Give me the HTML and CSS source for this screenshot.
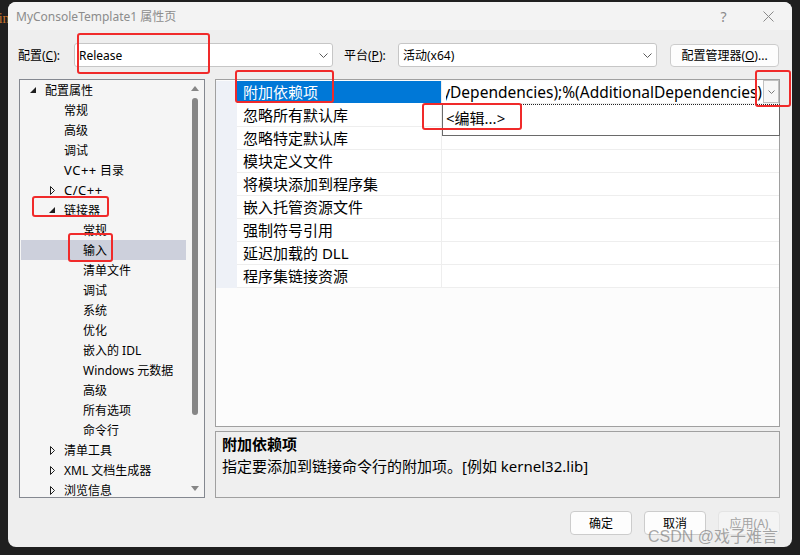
FILE: index.html
```html
<!DOCTYPE html>
<html lang="zh-CN">
<head>
<meta charset="utf-8">
<title>MyConsoleTemplate1 属性页</title>
<link rel="stylesheet" href="styles.css">
</head>
<body>
<span class="bg-text">Win</span>
<div class="dialog">
  <div class="titlebar">
    <span class="title">MyConsoleTemplate1 属性页</span>
    <span class="cap-btn help">?</span>
    <span class="cap-btn close"><svg width="11" height="11" viewBox="0 0 11 11"><path d="M0.5 0.5L10.5 10.5M10.5 0.5L0.5 10.5" stroke="#8a8a8a" stroke-width="1" fill="none"/></svg></span>
  </div>

  <div class="config-row">
    <span class="lbl lbl-config">配置(<u>C</u>):</span>
    <div class="combo"><span>Release</span><svg class="chev" width="9" height="5" viewBox="0 0 9 5"><path d="M0.5 0.5L4.5 4.5L8.5 0.5" stroke="#5a5a5a" fill="none"/></svg></div>
    <span class="lbl lbl-platform">平台(<u>P</u>):</span>
    <div class="combo"><span>活动(x64)</span><svg class="chev" width="9" height="5" viewBox="0 0 9 5"><path d="M0.5 0.5L4.5 4.5L8.5 0.5" stroke="#5a5a5a" fill="none"/></svg></div>
    <button class="btn btn-manager">配置管理器(<u>O</u>)...</button>
  </div>

  <div class="main">
    <div class="tree">
      <ul class="tree-list">
        <li class="node l0"><span class="tog"><svg width="6" height="6" viewBox="0 0 6 6"><path d="M6 0V6H0Z" fill="#1e1e1e"/></svg></span><span>配置属性</span></li>
        <li class="node l1"><span class="tog"></span><span>常规</span></li>
        <li class="node l1"><span class="tog"></span><span>高级</span></li>
        <li class="node l1"><span class="tog"></span><span>调试</span></li>
        <li class="node l1"><span class="tog"></span><span><span class="lt">VC++</span> 目录</span></li>
        <li class="node l1"><span class="tog"><svg width="6" height="9" viewBox="0 0 6 9"><path d="M1.5 0.5L5.5 4.5L1.5 8.5Z" stroke="#1e1e1e" fill="none"/></svg></span><span class="lt">C/C++</span></li>
        <li class="node l1"><span class="tog"><svg width="6" height="6" viewBox="0 0 6 6"><path d="M6 0V6H0Z" fill="#1e1e1e"/></svg></span><span>链接器</span></li>
        <li class="node l2"><span class="tog"></span><span>常规</span></li>
        <li class="node l2 sel"><span class="tog"></span><span>输入</span></li>
        <li class="node l2"><span class="tog"></span><span>清单文件</span></li>
        <li class="node l2"><span class="tog"></span><span>调试</span></li>
        <li class="node l2"><span class="tog"></span><span>系统</span></li>
        <li class="node l2"><span class="tog"></span><span>优化</span></li>
        <li class="node l2"><span class="tog"></span><span>嵌入的 IDL</span></li>
        <li class="node l2"><span class="tog"></span><span>Windows 元数据</span></li>
        <li class="node l2"><span class="tog"></span><span>高级</span></li>
        <li class="node l2"><span class="tog"></span><span>所有选项</span></li>
        <li class="node l2"><span class="tog"></span><span>命令行</span></li>
        <li class="node l1"><span class="tog"><svg width="6" height="9" viewBox="0 0 6 9"><path d="M1.5 0.5L5.5 4.5L1.5 8.5Z" stroke="#1e1e1e" fill="none"/></svg></span><span>清单工具</span></li>
        <li class="node l1"><span class="tog"><svg width="6" height="9" viewBox="0 0 6 9"><path d="M1.5 0.5L5.5 4.5L1.5 8.5Z" stroke="#1e1e1e" fill="none"/></svg></span><span>XML 文档生成器</span></li>
        <li class="node l1"><span class="tog"><svg width="6" height="9" viewBox="0 0 6 9"><path d="M1.5 0.5L5.5 4.5L1.5 8.5Z" stroke="#1e1e1e" fill="none"/></svg></span><span>浏览信息</span></li>
      </ul>
      <div class="vscroll">
        <div class="sb-arrow"><svg width="8" height="5" viewBox="0 0 8 5"><path d="M4 0L8 5H0Z" fill="#868686"/></svg></div>
        <div class="thumb"></div>
        <div class="sb-space"></div>
        <div class="sb-arrow"><svg width="8" height="5" viewBox="0 0 8 5"><path d="M0 0H8L4 5Z" fill="#868686"/></svg></div>
      </div>
    </div>

    <div class="right">
      <div class="grid">
        <div class="prow sel">
          <span class="gut"></span>
          <span class="pname">附加依赖项</span>
          <span class="pval"><span class="pval-text"><span>$(CoreLibraryDependencies);%(AdditionalDependencies)</span></span></span>
          <span class="dd-btn"><svg width="7" height="4" viewBox="0 0 7 4"><path d="M0.5 0.5L3.5 3.5L6.5 0.5" stroke="#7a7a7a" fill="none"/></svg></span>
        </div>
        <div class="prow"><span class="gut"></span><span class="pname">忽略所有默认库</span><span class="pval"></span></div>
        <div class="prow"><span class="gut"></span><span class="pname">忽略特定默认库</span><span class="pval"></span></div>
        <div class="prow"><span class="gut"></span><span class="pname">模块定义文件</span><span class="pval"></span></div>
        <div class="prow"><span class="gut"></span><span class="pname">将模块添加到程序集</span><span class="pval"></span></div>
        <div class="prow"><span class="gut"></span><span class="pname">嵌入托管资源文件</span><span class="pval"></span></div>
        <div class="prow"><span class="gut"></span><span class="pname">强制符号引用</span><span class="pval"></span></div>
        <div class="prow"><span class="gut"></span><span class="pname">延迟加载的 DLL</span><span class="pval"></span></div>
        <div class="prow"><span class="gut"></span><span class="pname">程序集链接资源</span><span class="pval"></span></div>
        <div class="popup">&lt;编辑...&gt;</div>
      </div>
      <div class="desc">
        <div class="desc-title">附加依赖项</div>
        <div>指定要添加到链接命令行的附加项。[例如 kernel32.lib]</div>
      </div>
    </div>
  </div>

  <div class="buttons">
    <button class="btn">确定</button>
    <button class="btn">取消</button>
    <button class="btn disabled">应用(A)</button>
  </div>
  <div class="watermark">CSDN @戏子难言</div>
</div>

<div class="mark mark-release"></div>
<div class="mark mark-dep"></div>
<div class="mark mark-dd"></div>
<div class="mark mark-edit"></div>
<div class="mark mark-linker"></div>
<div class="mark mark-input"></div>
</body>
</html>
```

FILE: styles.css
```css
* { box-sizing: border-box; }
html, body { margin: 0; padding: 0; }
body {
  position: relative;
  width: 800px;
  height: 555px;
  overflow: hidden;
  background: #1f1f1f;
  font-family: "Noto Sans", "Noto Sans CJK SC", sans-serif;
  font-size: 12px;
  color: #000;
}
.bg-text {
  position: absolute;
  left: -14px;
  top: 11px;
  color: #c8742e;
  font-size: 14px;
  font-family: "Liberation Serif", serif;
}
.dialog {
  position: relative;
  z-index: 1;
  margin: 2px 0 0 8px;
  width: 784px;
  height: 545px;
  background: #eeeeee;
  border-radius: 8px;
  overflow: hidden;
  display: flex;
  flex-direction: column;
}
.titlebar {
  flex: none;
  height: 28px;
  display: flex;
  align-items: center;
  background: #f3f3f3;
  padding-left: 8px;
}
.title { flex: 1; color: #8c8c8c; font-size: 12px; }
.cap-btn {
  width: 45px;
  height: 28px;
  display: flex;
  align-items: center;
  justify-content: center;
  color: #8a8a8a;
}
.help { font-size: 14px; }
.close { margin-right: 1px; }

.config-row {
  flex: none;
  margin-top: 13px;
  height: 24px;
  display: flex;
  align-items: center;
  padding-left: 10px;
}
.lbl { white-space: nowrap; }
.lbl-config { width: 56px; }
.lbl-platform { width: 54px; margin-left: 11px; }
.combo {
  width: 259px;
  height: 24px;
  background: #fff;
  border: 1px solid #c6c6c6;
  border-radius: 3px;
  display: flex;
  align-items: center;
  justify-content: space-between;
  padding: 0 4px 0 4px;
}
.btn {
  width: 62px;
  height: 24px;
  padding: 0;
  border: 1px solid #cccccc;
  border-radius: 4px;
  background: #fdfdfd;
  font-family: inherit;
  font-size: 12px;
  color: #000;
}
.btn-manager { width: 109px; height: 23px; margin-left: 13px; }
.btn.disabled { color: #a3a3a3; background: #f4f4f4; border-color: #e4e4e4; }

.main {
  flex: none;
  margin-top: 12px;
  height: 419px;
  display: flex;
  gap: 10px;
  padding-left: 11px;
}
.tree {
  width: 186px;
  height: 419px;
  border: 1px solid #848890;
  background: #f5f5f5;
  display: flex;
  overflow: hidden;
}
.tree-list {
  flex: 1;
  list-style: none;
  margin: 0;
  padding: 0 0 0 1px;
}
.node {
  height: 20px;
  display: flex;
  align-items: center;
  white-space: nowrap;
}
.lt { font-size: 13px; letter-spacing: 0.5px; }
.l0 { padding-left: 9px; }
.l1 { padding-left: 28px; }
.l2 { padding-left: 47px; }
.node.sel { background: #cdd0dc; }
.tog { width: 15px; flex: none; display: flex; align-items: center; }
.vscroll {
  width: 18px;
  flex: none;
  display: flex;
  flex-direction: column;
  align-items: center;
}
.sb-arrow { height: 17px; display: flex; align-items: center; justify-content: center; }
.thumb { margin-top: 1px; width: 6px; height: 317px; border-radius: 3px; background: #868686; }
.sb-space { flex: 1; }

.right {
  width: 565px;
  display: flex;
  flex-direction: column;
  gap: 4px;
}
.grid {
  position: relative;
  height: 348px;
  border: 1px solid #a0a0a0;
  background: #fcfcfc;
  padding-top: 1px;
}
.prow {
  position: relative;
  display: flex;
  height: 23px;
  font-size: 15px;
  line-height: 22px;
}
.gut { width: 21px; flex: none; background: #eef1f7; }
.pname {
  width: 205px;
  flex: none;
  padding-left: 6px;
  background: #fff;
  border-bottom: 1px solid #eeeeee;
  border-right: 1px solid #eeeeee;
  white-space: nowrap;
}
.pval {
  flex: 1;
  min-width: 0;
  padding-left: 4px;
  background: #fff;
  border-bottom: 1px solid #eeeeee;
  white-space: nowrap;
  overflow: hidden;
}
.prow.sel .pname { background: #0078d7; color: #fff; border-bottom-color: #fff; }
.pval-text {
  display: flex;
  justify-content: flex-end;
  margin-right: 17px;
  overflow: hidden;
  font-size: 15.5px;
}
.pval-text span { flex: none; }
.dd-btn {
  position: absolute;
  right: 0;
  top: -1px;
  width: 16px;
  height: 23px;
  border: 1px solid #c0c0c0;
  background: #f7f7f7;
  display: flex;
  align-items: center;
  justify-content: center;
}
.popup {
  position: absolute;
  left: 226px;
  top: 24px;
  width: 338px;
  height: 32px;
  background: #fff;
  border: 1px solid #6a6a6a;
  border-top: 1px dotted #222;
  padding: 2px 0 0 3px;
  font-size: 15px;
  line-height: 22px;
}
.desc {
  height: 67px;
  border: 1px solid #a0a0a0;
  background: #efefef;
  padding: 1px 0 0 6px;
  font-size: 15px;
  line-height: 22px;
}
.desc-title { font-weight: bold; }

.buttons {
  flex: none;
  margin-top: 13px;
  display: flex;
  justify-content: flex-end;
  gap: 12px;
  padding-right: 12px;
}
.watermark {
  position: absolute;
  left: 640px;
  top: 525px;
  font-family: "Liberation Sans", "Noto Sans CJK SC", sans-serif;
  font-size: 16px;
  line-height: 20px;
  color: rgba(110, 110, 110, 0.6);
  white-space: nowrap;
}

.mark {
  position: absolute;
  z-index: 5;
  border: 2px solid #f02a2a;
  border-radius: 3px;
}
.mark-release { left: 77px; top: 33px; width: 133px; height: 41px; }
.mark-dep { left: 235px; top: 70px; width: 99px; height: 33px; }
.mark-dd { left: 755px; top: 70px; width: 36px; height: 37px; }
.mark-edit { left: 422px; top: 103px; width: 100px; height: 27px; }
.mark-linker { left: 32px; top: 196px; width: 77px; height: 21px; }
.mark-input { left: 68px; top: 233px; width: 45px; height: 29px; }
```
